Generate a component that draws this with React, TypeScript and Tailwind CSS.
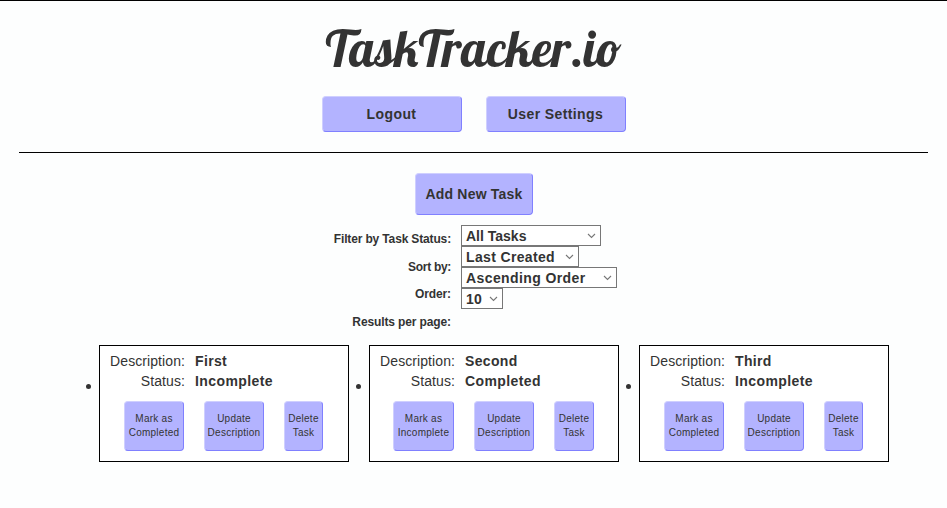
import React from "react";

const bevel =
  "rounded-[4px] border border-t-[#cfcfff] border-l-[#cfcfff] border-r-[#8080ff] border-b-[#8080ff] bg-[#b3b3ff] text-center text-[#333]";

const filters = [
  { label: "Filter by Task Status:", value: "All Tasks", width: "w-[140px]", text: "tracking-[0px]", labelText: "tracking-[-0.15px]" },
  { label: "Sort by:", value: "Last Created", width: "w-[118px]", text: "tracking-[0.35px]", labelText: "tracking-[-0.3px]" },
  { label: "Order:", value: "Ascending Order", width: "w-[156px]", text: "tracking-[0.4px]", labelText: "tracking-[-0.12px]" },
  { label: "Results per page:", value: "10", width: "w-[42px]", text: "tracking-[0.3px]", labelText: "tracking-[-0.12px]" },
];

const tasks = [
  { title: "First", status: "Incomplete", done: false },
  { title: "Second", status: "Completed", done: true },
  { title: "Third", status: "Incomplete", done: false },
];

function Chevron() {
  return (
    <svg width="9" height="6" viewBox="0 0 9 6" fill="none" stroke="#777" strokeWidth="1.1" className="mt-px shrink-0">
      <path d="M1 1 L4.5 4.5 L8 1" />
    </svg>
  );
}

function TaskCard({ title, status, done }: { title: string; status: string; done: boolean }) {
  return (
    <li className="flex items-center">
      <span className="mr-2 mt-[-34px] h-[5px] w-[5px] rounded-full bg-[#333]" />
      <div className="h-[117px] w-[250px] border border-black bg-white pt-[5px]">
        <dl className="grid grid-cols-[85px_1fr] gap-x-[10px] text-[14px] leading-[20px]">
          <dt className="text-right tracking-[0.08px]">Description:</dt>
          <dd className="font-bold tracking-[0.35px]">{title}</dd>
          <dt className="text-right tracking-[0.08px]">Status:</dt>
          <dd className="font-bold tracking-[0.4px]">{status}</dd>
        </dl>
        <div className={`mt-[10px] flex gap-5 text-[10px] leading-[14px] tracking-[0.25px] ${done ? "pl-[23px]" : "pl-6"}`}>
          <button className={`${bevel} h-[50px] ${done ? "w-[61px]" : "w-[60px]"}`}>
            Mark as<br />{done ? "Incomplete" : "Completed"}
          </button>
          <button className={`${bevel} h-[50px] w-[60px]`}>
            Update<br />Description
          </button>
          <button className={`${bevel} h-[50px] ${done ? "w-[40px]" : "w-[39px]"}`}>
            Delete<br />Task
          </button>
        </div>
      </div>
    </li>
  );
}

export default function App() {
  return (
    <div className="h-[508px] w-[947px] overflow-hidden border-t border-black bg-[#fdfefe] font-['Liberation_Sans',Arial,sans-serif] text-[#333]">
      <header className="mx-[19px] flex h-[152px] flex-col items-center border-b border-black">
        <h1 className="mt-[18px] flex h-[60px] items-center whitespace-nowrap font-['Lobster','Liberation_Serif',serif] text-[50px] font-normal leading-[60px]">
          TaskTracker.io
        </h1>
        <nav className="mt-[17px] flex gap-6">
          <button className={`${bevel} h-9 w-[140px] text-[14px] font-bold tracking-[0.4px]`}>Logout</button>
          <button className={`${bevel} h-9 w-[140px] text-[14px] font-bold tracking-[0.4px]`}>User Settings</button>
        </nav>
      </header>
      <main>
        <div className="flex justify-center pt-5">
          <button className={`${bevel} h-[42px] w-[118px] pl-px text-[14px] font-bold tracking-[0.2px]`}>Add New Task</button>
        </div>
        <form className="mt-[10px] flex h-[110px] gap-[10px]">
          <div className="w-[451px] pt-px text-right text-[12px] font-bold leading-[27.7px]">
            {filters.map((f) => (
              <label key={f.label} className={`block ${f.labelText}`}>{f.label}</label>
            ))}
          </div>
          <div className="flex flex-col">
            {filters.map((f) => (
              <div
                key={f.label}
                className={`flex h-[21px] items-center justify-between border border-[#777] bg-white pl-1 pr-[4px] text-[14px] font-bold leading-[19px] ${f.width} ${f.text}`}
              >
                <span className="whitespace-nowrap pt-[2px]">{f.value}</span>
                <Chevron />
              </div>
            ))}
          </div>
        </form>
        <ul className="mt-[10px] flex gap-[7px] pl-[86px]">
          {tasks.map((t) => (
            <TaskCard key={t.title} {...t} />
          ))}
        </ul>
      </main>
    </div>
  );
}
